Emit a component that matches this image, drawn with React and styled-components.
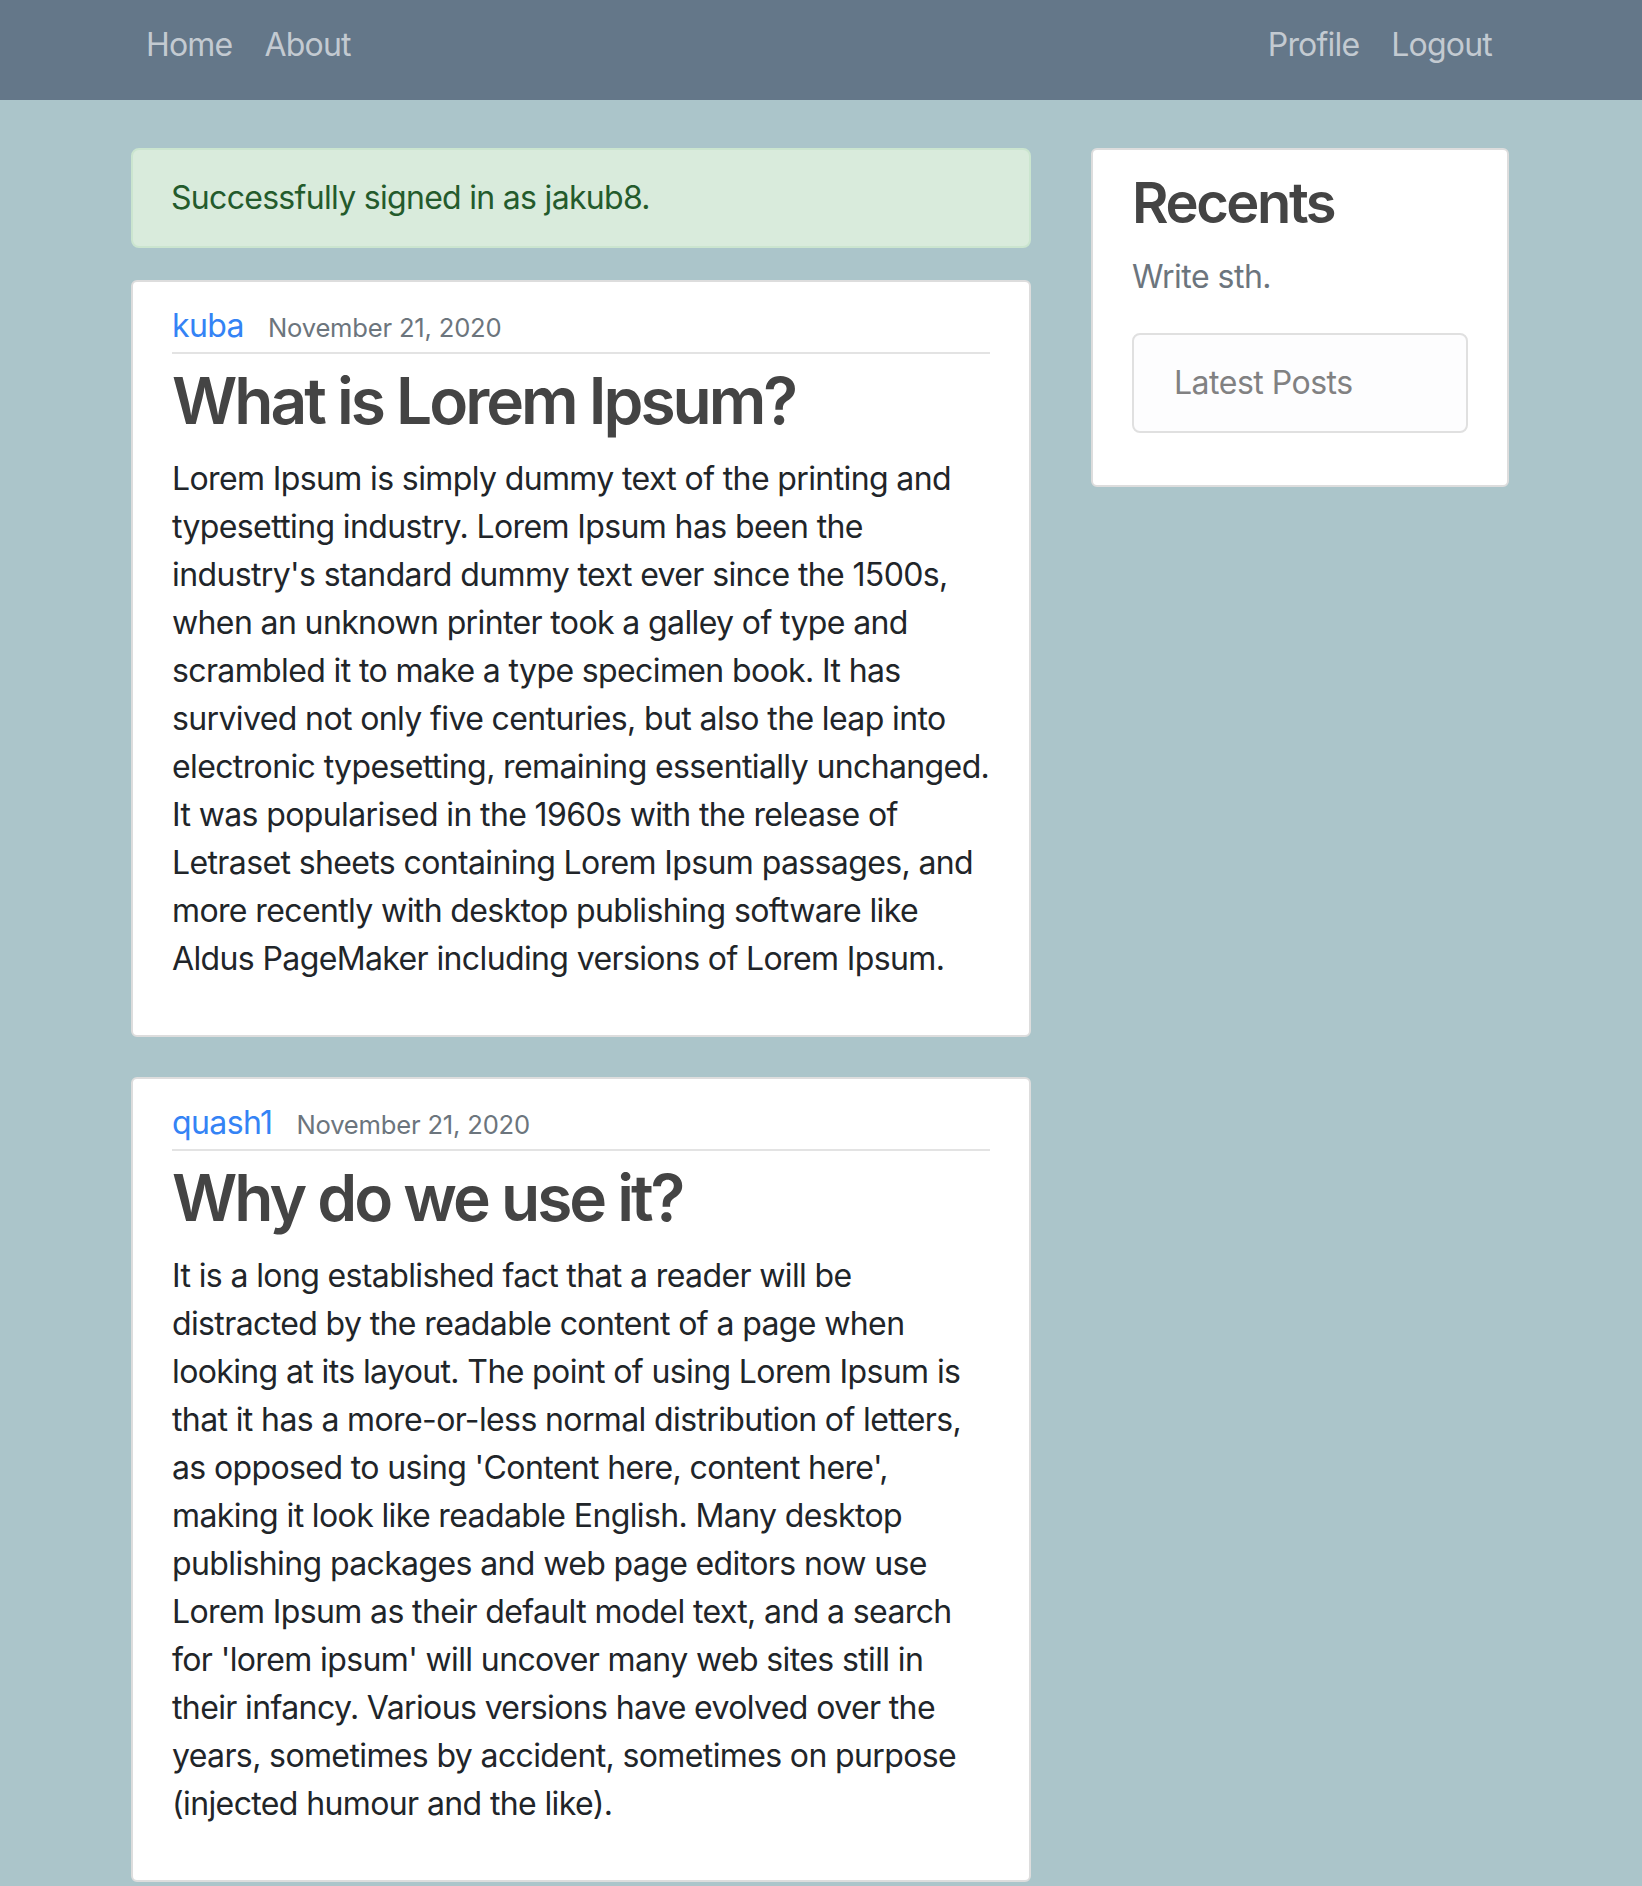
import React from "react";
import styled, { createGlobalStyle } from "styled-components";

const Global = createGlobalStyle`
  html, body { margin: 0; padding: 0; }
  body {
    background: #abc5ca;
    font-family: Inter, "Open Sans", "Liberation Sans", sans-serif;
    font-size: 32px;
    line-height: 48px;
    color: #212529;
    min-height: 1886px;
  }
  * { box-sizing: border-box; }
`;

const NavBar = styled.nav`
  height: 100px;
  background: #647789;
`;

const NavInner = styled.div`
  width: 1440px;
  margin: 0 auto;
  padding: 21px 33px 0 29px;
  display: flex;
  justify-content: space-between;
`;

const NavGroup = styled.div`
  display: flex;
`;

const NavLink = styled.a`
  display: block;
  padding: 0 16px;
  color: #c3cad1;
  text-decoration: none;
  font-size: 32px;
  line-height: 48px;
  letter-spacing: -0.8px;
`;

const Container = styled.main`
  width: 1440px;
  margin: 48px auto 0;
  padding: 0 30px;
  display: grid;
  grid-template-columns: 900px 418px;
  column-gap: 60px;
  align-items: start;
`;

const Column = styled.div`
  display: flex;
  flex-direction: column;
`;

const Alert = styled.div`
  background: #d9ebdc;
  border: 2px solid #cbe5cf;
  border-radius: 8px;
  padding: 24px 38px;
  color: #245b2c;
  margin-bottom: 32px;
  letter-spacing: -0.7px;
`;

const Section = styled.article`
  background: #ffffff;
  border: 2px solid #dddddd;
  border-radius: 6px;
  padding: 20px 39px;
  margin-bottom: ${(p) => p.$mb ?? 40}px;
`;

const Meta = styled.div`
  border-bottom: 2px solid #e3e3e3;
  padding-bottom: 2px;
  margin-bottom: 8px;
  height: 52px;
`;

const Author = styled.a`
  color: #3483f5;
  text-decoration: none;
  margin-right: 24px;
  letter-spacing: -0.6px;
`;

const DateText = styled.small`
  font-size: 25.6px;
  line-height: 1;
  color: #6c757d;
  letter-spacing: -0.2px;
`;

const Title = styled.h2`
  margin: 0 0 16px;
  font-size: 64px;
  line-height: 77px;
  font-weight: 600;
  color: #444444;
  letter-spacing: -3px;
`;

const Content = styled.p`
  margin: 0 0 32px;
  white-space: pre;
  letter-spacing: -0.62px;
`;

const SideTitle = styled.h3`
  margin: 0 0 16px;
  font-size: 56px;
  line-height: 67px;
  font-weight: 600;
  color: #444444;
  letter-spacing: -2.4px;
`;

const Muted = styled.p`
  margin: 0 0 32px;
  color: #6c757d;
  letter-spacing: -0.5px;
`;

const ListGroup = styled.ul`
  list-style: none;
  margin: 0 0 32px;
  padding: 0;
`;

const ListItem = styled.li`
  background: #fdfdfe;
  color: #818182;
  border: 2px solid #e0e0e0;
  border-radius: 8px;
  padding: 24px 40px;
  letter-spacing: -0.5px;
`;

const posts = [
  {
    author: "kuba",
    date: "November 21, 2020",
    title: "What is Lorem Ipsum?",
    lines: [
      "Lorem Ipsum is simply dummy text of the printing and",
      "typesetting industry. Lorem Ipsum has been the",
      "industry's standard dummy text ever since the 1500s,",
      "when an unknown printer took a galley of type and",
      "scrambled it to make a type specimen book. It has",
      "survived not only five centuries, but also the leap into",
      "electronic typesetting, remaining essentially unchanged.",
      "It was popularised in the 1960s with the release of",
      "Letraset sheets containing Lorem Ipsum passages, and",
      "more recently with desktop publishing software like",
      "Aldus PageMaker including versions of Lorem Ipsum.",
    ],
  },
  {
    author: "quash1",
    date: "November 21, 2020",
    title: "Why do we use it?",
    lines: [
      "It is a long established fact that a reader will be",
      "distracted by the readable content of a page when",
      "looking at its layout. The point of using Lorem Ipsum is",
      "that it has a more-or-less normal distribution of letters,",
      "as opposed to using 'Content here, content here',",
      "making it look like readable English. Many desktop",
      "publishing packages and web page editors now use",
      "Lorem Ipsum as their default model text, and a search",
      "for 'lorem ipsum' will uncover many web sites still in",
      "their infancy. Various versions have evolved over the",
      "years, sometimes by accident, sometimes on purpose",
      "(injected humour and the like).",
    ],
  },
];

export default function App() {
  return (
    <>
      <Global />
      <NavBar>
        <NavInner>
          <NavGroup>
            <NavLink href="#">Home</NavLink>
            <NavLink href="#">About</NavLink>
          </NavGroup>
          <NavGroup>
            <NavLink href="#">Profile</NavLink>
            <NavLink href="#">Logout</NavLink>
          </NavGroup>
        </NavInner>
      </NavBar>
      <Container>
        <Column>
          <Alert>Successfully signed in as jakub8.</Alert>
          {posts.map((p) => (
            <Section key={p.title}>
              <Meta>
                <Author href="#">{p.author}</Author>
                <DateText>{p.date}</DateText>
              </Meta>
              <Title>{p.title}</Title>
              <Content>{p.lines.join("\n")}</Content>
            </Section>
          ))}
        </Column>
        <Section $mb={0}>
          <SideTitle>Recents</SideTitle>
          <Muted>Write sth.</Muted>
          <ListGroup>
            <ListItem>Latest Posts</ListItem>
          </ListGroup>
        </Section>
      </Container>
    </>
  );
}
